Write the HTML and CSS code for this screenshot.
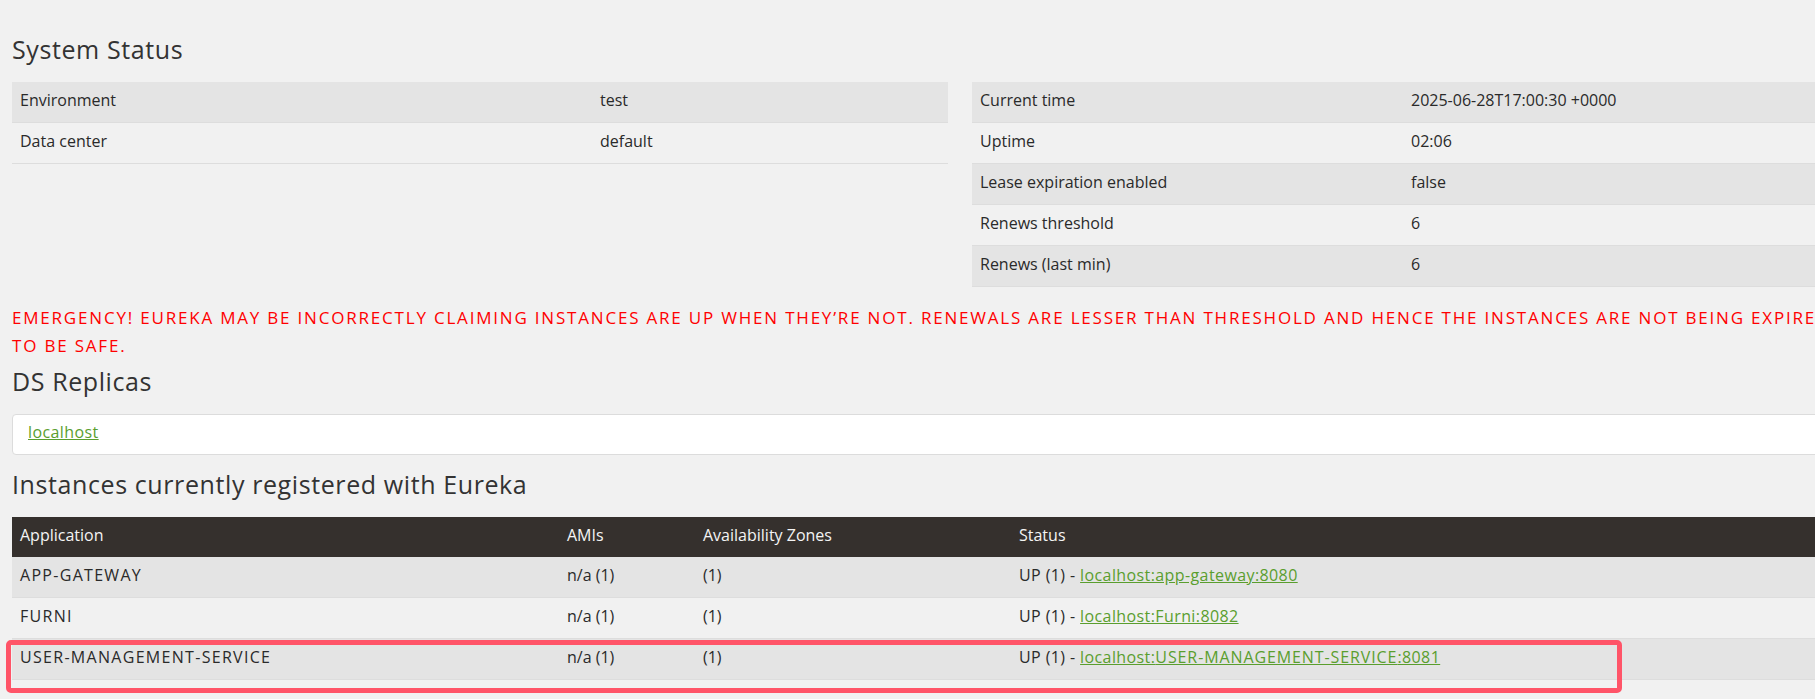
FILE: index.html
```html
<!DOCTYPE html>
<html lang="en">
<head>
<meta charset="utf-8">
<title>Eureka</title>
<link rel="stylesheet" href="styles.css">
</head>
<body>
<div class="page">
  <h2 class="section-title">System Status</h2>
  <div class="status-grid">
    <table class="kv-table kv-left">
      <colgroup><col class="kv-key-left"><col></colgroup>
      <tbody>
        <tr><td>Environment</td><td>test</td></tr>
        <tr><td>Data center</td><td>default</td></tr>
      </tbody>
    </table>
    <table class="kv-table kv-right">
      <colgroup><col class="kv-key-right"><col></colgroup>
      <tbody>
        <tr><td>Current time</td><td>2025-06-28T17:00:30 +0000</td></tr>
        <tr><td>Uptime</td><td>02:06</td></tr>
        <tr><td>Lease expiration enabled</td><td>false</td></tr>
        <tr><td>Renews threshold</td><td>6</td></tr>
        <tr><td>Renews (last min)</td><td>6</td></tr>
      </tbody>
    </table>
  </div>

  <h4 class="emergency">EMERGENCY! EUREKA MAY BE INCORRECTLY CLAIMING INSTANCES ARE UP WHEN THEY’RE NOT. RENEWALS ARE LESSER THAN THRESHOLD AND HENCE THE INSTANCES ARE NOT BEING EXPIRED JUST<br>TO BE SAFE.</h4>

  <h2 class="section-title">DS Replicas</h2>
  <ul class="replicas">
    <li><a class="link" href="#">localhost</a></li>
  </ul>

  <h2 class="section-title">Instances currently registered with Eureka</h2>
  <div class="instances-wrap">
    <table class="instances">
      <colgroup>
        <col class="col-app"><col class="col-ami"><col class="col-az"><col>
      </colgroup>
      <thead>
        <tr><th>Application</th><th>AMIs</th><th>Availability Zones</th><th>Status</th></tr>
      </thead>
      <tbody>
        <tr>
          <td><span class="caps">APP-GATEWAY</span></td>
          <td>n/a (1)</td>
          <td>(1)</td>
          <td class="status-cell">UP (1) - <a class="link" href="#">localhost:app-gateway:8080</a></td>
        </tr>
        <tr>
          <td><span class="caps">FURNI</span></td>
          <td>n/a (1)</td>
          <td>(1)</td>
          <td class="status-cell">UP (1) - <a class="link" href="#">localhost:Furni:8082</a></td>
        </tr>
        <tr>
          <td><span class="caps">USER-MANAGEMENT-SERVICE</span></td>
          <td>n/a (1)</td>
          <td>(1)</td>
          <td class="status-cell">UP (1) - <a class="link" href="#">localhost:<span class="caps-soft">USER-MANAGEMENT-SERVICE</span>:8081</a></td>
        </tr>
      </tbody>
    </table>
    <div class="highlight"></div>
  </div>
</div>
</body>
</html>
```

FILE: styles.css
```css
html {
  overflow: hidden;
}

body {
  margin: 0;
  background: #f1f1f1;
  font-family: "Open Sans", "Noto Sans", sans-serif;
  font-size: 16px;
  color: #2a2a2a;
}

.page {
  width: 1896px;
  padding: 36px 12px 60px;
}

.section-title {
  font-size: 25px;
  line-height: 27.5px;
  font-weight: 400;
  letter-spacing: 0.6px;
  color: #333333;
  margin: 0 0 18px;
}

.status-grid {
  display: grid;
  grid-template-columns: 1fr 1fr;
  column-gap: 24px;
  align-items: start;
  margin-bottom: 17px;
}

.kv-table,
.instances {
  width: 100%;
  border-collapse: collapse;
  table-layout: fixed;
}

.kv-key-left {
  width: 580px;
}

.kv-key-right {
  width: 431px;
}

.kv-table td,
.instances td,
.instances th {
  padding: 6px 8px 10px;
  line-height: 24px;
  text-align: left;
  white-space: nowrap;
}

.kv-table td,
.instances td {
  border-bottom: 1px solid #dddddd;
}

.kv-table tr:nth-child(odd) td,
.instances tbody tr:nth-child(odd) td {
  background: #e4e4e4;
}

.emergency {
  color: #ff0000;
  font-size: 17px;
  line-height: 28.5px;
  font-weight: 400;
  letter-spacing: 1.8px;
  margin: 0 0 7.5px;
  white-space: nowrap;
}

.replicas {
  list-style: none;
  margin: 0 0 16.5px;
  padding: 7px 15px 11px;
  background: #ffffff;
  border: 1px solid #dcdcdc;
  border-radius: 4px;
  line-height: 21px;
}

.link {
  color: #5a9e2e;
  text-decoration: underline;
  letter-spacing: 0.4px;
}

.status-cell {
  letter-spacing: 0.4px;
}

.caps {
  letter-spacing: 1.3px;
}

.caps-soft {
  letter-spacing: 0.9px;
}

.instances-wrap {
  position: relative;
}

.col-app {
  width: 547px;
}

.col-ami {
  width: 136px;
}

.col-az {
  width: 316px;
}

.instances th {
  background: #35302d;
  color: #f4f4f4;
  font-weight: 400;
}

.highlight {
  position: absolute;
  left: -6px;
  top: 123px;
  width: 1606px;
  height: 43px;
  border: 5px solid #ff5468;
  border-radius: 5px;
  pointer-events: none;
}
```
